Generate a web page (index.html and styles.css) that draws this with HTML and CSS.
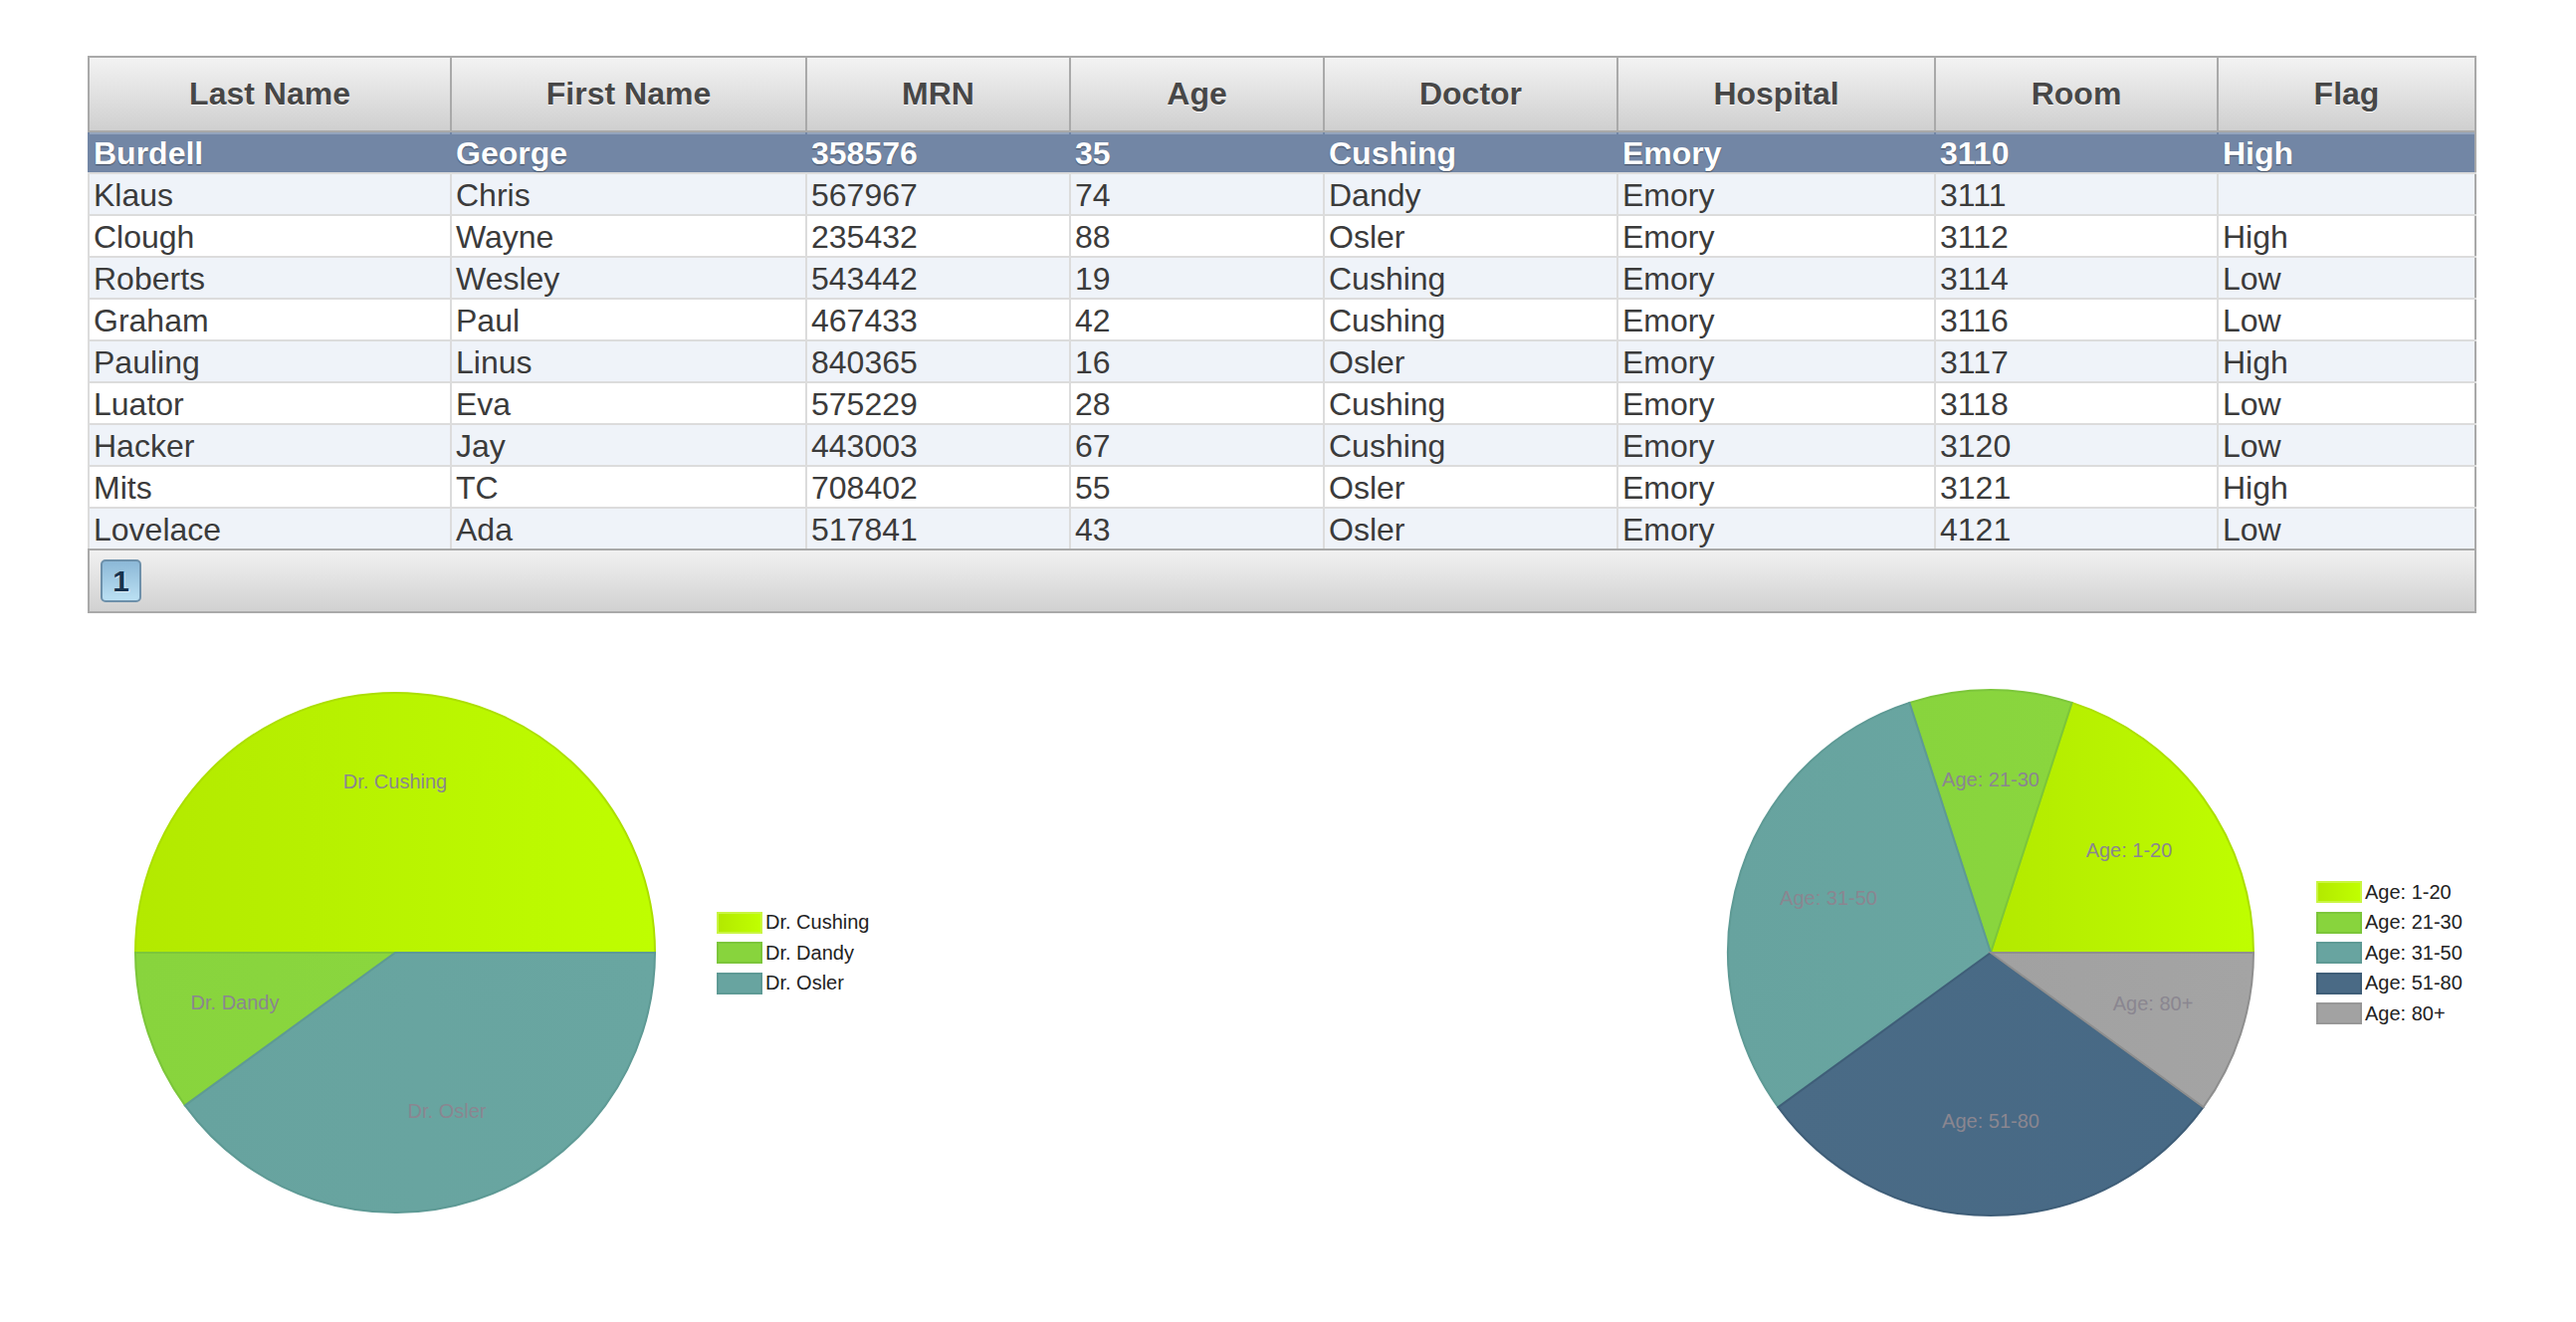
FILE: index.html
```html
<!DOCTYPE html>
<html>
<head>
<meta charset="utf-8">
<title>Patients</title>
<link rel="stylesheet" href="styles.css">
</head>
<body>
<div class="page">
  <table class="grid">
    <colgroup>
      <col class="c1"><col class="c2"><col class="c3"><col class="c4"><col class="c5"><col class="c6"><col class="c7"><col class="c8">
    </colgroup>
    <thead>
      <tr><th>Last Name</th><th>First Name</th><th>MRN</th><th>Age</th><th>Doctor</th><th>Hospital</th><th>Room</th><th>Flag</th></tr>
    </thead>
    <tbody>
      <tr class="selected"><td>Burdell</td><td>George</td><td>358576</td><td>35</td><td>Cushing</td><td>Emory</td><td>3110</td><td>High</td></tr>
      <tr><td>Klaus</td><td>Chris</td><td>567967</td><td>74</td><td>Dandy</td><td>Emory</td><td>3111</td><td></td></tr>
      <tr><td>Clough</td><td>Wayne</td><td>235432</td><td>88</td><td>Osler</td><td>Emory</td><td>3112</td><td>High</td></tr>
      <tr><td>Roberts</td><td>Wesley</td><td>543442</td><td>19</td><td>Cushing</td><td>Emory</td><td>3114</td><td>Low</td></tr>
      <tr><td>Graham</td><td>Paul</td><td>467433</td><td>42</td><td>Cushing</td><td>Emory</td><td>3116</td><td>Low</td></tr>
      <tr><td>Pauling</td><td>Linus</td><td>840365</td><td>16</td><td>Osler</td><td>Emory</td><td>3117</td><td>High</td></tr>
      <tr><td>Luator</td><td>Eva</td><td>575229</td><td>28</td><td>Cushing</td><td>Emory</td><td>3118</td><td>Low</td></tr>
      <tr><td>Hacker</td><td>Jay</td><td>443003</td><td>67</td><td>Cushing</td><td>Emory</td><td>3120</td><td>Low</td></tr>
      <tr><td>Mits</td><td>TC</td><td>708402</td><td>55</td><td>Osler</td><td>Emory</td><td>3121</td><td>High</td></tr>
      <tr><td>Lovelace</td><td>Ada</td><td>517841</td><td>43</td><td>Osler</td><td>Emory</td><td>4121</td><td>Low</td></tr>
    </tbody>
    <tfoot>
      <tr><td colspan="8" class="pager"><span class="pager-btn">1</span></td></tr>
    </tfoot>
  </table>

  <div class="charts">
    <div class="chart chart-doctor">
      <svg class="pie" width="532" height="532" viewBox="0 0 532 532">
        <defs>
          <linearGradient id="gLime" x1="0" y1="0" x2="1" y2="0"><stop offset="0" stop-color="#b3e900"/><stop offset="1" stop-color="#bffe00"/></linearGradient>
          <linearGradient id="gGreen" x1="0" y1="0" x2="1" y2="0"><stop offset="0" stop-color="#88d43d"/><stop offset="1" stop-color="#8ad63e"/></linearGradient>
          <linearGradient id="gTeal" x1="0" y1="0" x2="1" y2="0"><stop offset="0" stop-color="#67a39f"/><stop offset="1" stop-color="#69a6a1"/></linearGradient>
        </defs>
        <path class="s-lime" d="M266,266 L527,266 A261,261 0 0 0 266,5 A261,261 0 0 0 5,266 Z"/>
        <path class="s-green" d="M266,266 L5,266 A261,261 0 0 0 54.85,419.41 Z"/>
        <path class="s-teal" d="M266,266 L54.85,419.41 A261,261 0 0 0 527,266 Z"/>
        <text class="pie-label" x="266" y="96">Dr. Cushing</text>
        <text class="pie-label" x="105" y="318">Dr. Dandy</text>
        <text class="pie-label" x="318" y="427">Dr. Osler</text>
      </svg>
      <div class="legend">
        <div class="legend-item"><span class="swatch sw-lime"></span>Dr. Cushing</div>
        <div class="legend-item"><span class="swatch sw-green"></span>Dr. Dandy</div>
        <div class="legend-item"><span class="swatch sw-teal"></span>Dr. Osler</div>
      </div>
    </div>

    <div class="chart chart-age">
      <svg class="pie" width="532" height="532" viewBox="0 0 532 532">
        <defs>
          <linearGradient id="gLime2" x1="0" y1="0" x2="1" y2="0"><stop offset="0" stop-color="#b3e900"/><stop offset="1" stop-color="#bffe00"/></linearGradient>
          <linearGradient id="gSlate" x1="0" y1="0" x2="1" y2="0"><stop offset="0" stop-color="#4a6b86"/><stop offset="1" stop-color="#476985"/></linearGradient>
          <linearGradient id="gGray" x1="0" y1="0" x2="1" y2="0"><stop offset="0" stop-color="#a1a1a1"/><stop offset="1" stop-color="#a4a4a4"/></linearGradient>
        </defs>
        <path class="s-lime2" d="M266,266 L530,266 A264,264 0 0 0 347.58,14.92 Z"/>
        <path class="s-green" d="M266,266 L347.58,14.92 A264,264 0 0 0 184.42,14.92 Z"/>
        <path class="s-teal" d="M266,266 L184.42,14.92 A264,264 0 0 0 52.42,421.18 Z"/>
        <path class="s-slate" d="M266,266 L52.42,421.18 A264,264 0 0 0 479.58,421.18 Z"/>
        <path class="s-gray" d="M266,266 L479.58,421.18 A264,264 0 0 0 530,266 Z"/>
        <text class="pie-label" x="405" y="165">Age: 1-20</text>
        <text class="pie-label" x="266" y="94">Age: 21-30</text>
        <text class="pie-label" x="103" y="213">Age: 31-50</text>
        <text class="pie-label" x="266" y="437">Age: 51-80</text>
        <text class="pie-label" x="429" y="319">Age: 80+</text>
      </svg>
      <div class="legend">
        <div class="legend-item"><span class="swatch sw-lime"></span>Age: 1-20</div>
        <div class="legend-item"><span class="swatch sw-green"></span>Age: 21-30</div>
        <div class="legend-item"><span class="swatch sw-teal"></span>Age: 31-50</div>
        <div class="legend-item"><span class="swatch sw-slate"></span>Age: 51-80</div>
        <div class="legend-item"><span class="swatch sw-gray"></span>Age: 80+</div>
      </div>
    </div>
  </div>
</div>
</body>
</html>
```

FILE: styles.css
```css
html, body {
  margin: 0;
  padding: 0;
  background: #ffffff;
}

body {
  font-family: "Liberation Sans", Arial, Helvetica, sans-serif;
}

.page {
  padding: 56px 0 0 88px;
}

/* ---------- grid ---------- */
.grid {
  border-collapse: collapse;
  table-layout: fixed;
  width: 2398px;
  border: 2px solid #a9a9a9;
}

.c1 { width: 364px; }
.c2 { width: 357px; }
.c3 { width: 265px; }
.c4 { width: 255px; }
.c5 { width: 295px; }
.c6 { width: 319px; }
.c7 { width: 284px; }
.c8 { width: 259px; }

.grid th {
  height: 73px;
  padding: 0;
  background: linear-gradient(#f3f3f3, #cfcfcf);
  border-left: 2px solid #a9a9a9;
  border-bottom: 2px solid #a9a9a9;
  font-size: 32px;
  font-weight: bold;
  color: #474747;
  text-shadow: 0 1px 0 #ffffff;
  text-align: center;
}

.grid tbody td {
  height: 38px;
  padding: 2px 4px 0;
  border-left: 2px solid #dcdcdc;
  border-bottom: 2px solid #dcdcdc;
  font-size: 32px;
  line-height: 38px;
  color: #3b3b3b;
  white-space: nowrap;
  overflow: hidden;
  background: #ffffff;
}

.grid tbody tr:nth-child(even) td {
  background: #eff3f9;
}

.grid tbody tr.selected td {
  background: #7286a5;
  color: #ffffff;
  font-weight: bold;
  border-left-color: #7286a5;
  box-shadow: inset 0 2px 0 #93a4bd;
  text-shadow: 0 1px 1px #3e4a5e;
}

.grid tbody tr:last-child td {
  border-bottom: 2px solid #a9a9a9;
}

.grid .pager {
  height: 61px;
  padding: 0 0 0 11px;
  background: linear-gradient(#f1f1f1, #d1d1d1);
  border-top: 2px solid #a9a9a9;
  vertical-align: middle;
}

.pager-btn {
  display: inline-block;
  width: 37px;
  height: 39px;
  border: 2px solid #6d90aa;
  border-radius: 5px;
  background: linear-gradient(#8cb8d7, #bbe0f3);
  font-size: 30px;
  font-weight: bold;
  line-height: 39px;
  text-align: center;
  color: #17324e;
  text-shadow: 1px 1px 0 rgba(255, 255, 255, 0.6);
  vertical-align: middle;
}

/* ---------- charts ---------- */
.charts {
  display: flex;
  margin-top: 75px;
}

.chart {
  display: flex;
  align-items: center;
}

.chart-doctor {
  margin-left: 43px;
  width: 1603px;
}

.pie {
  display: block;
  flex: none;
}

.s-lime { fill: url(#gLime); stroke: #acdf00; stroke-width: 2; }
.s-lime2 { fill: url(#gLime2); stroke: #acdf00; stroke-width: 2; }
.s-green { fill: url(#gGreen); stroke: #7cc63a; stroke-width: 2; }
.s-teal { fill: url(#gTeal); stroke: #5e9a95; stroke-width: 2; }
.s-slate { fill: url(#gSlate); stroke: #3f5e78; stroke-width: 2; }
.s-gray { fill: url(#gGray); stroke: #8f8f8f; stroke-width: 2; }

.pie-label {
  font-family: "Liberation Sans", Arial, Helvetica, sans-serif;
  font-size: 20px;
  fill: #8a8690;
  text-anchor: middle;
  dominant-baseline: middle;
}

.legend {
  display: flex;
  flex-direction: column;
  gap: 8.5px;
  margin-left: 57px;
}

.chart-age .legend {
  margin-left: 61px;
}

.legend-item {
  display: flex;
  align-items: center;
  height: 22px;
  font-size: 20px;
  color: #222222;
}

.swatch {
  width: 46px;
  height: 22px;
  box-sizing: border-box;
  border: 2px solid;
  margin-right: 3px;
}

.sw-lime { background: linear-gradient(to right, #b3e900, #c0ff00); border-color: #c9f542; }
.sw-green { background: #88d43d; border-color: #7cc63a; }
.sw-teal { background: #68a4a0; border-color: #5e9a95; }
.sw-slate { background: #4a6a85; border-color: #3f5e78; }
.sw-gray { background: #a2a2a2; border-color: #979797; }
```
